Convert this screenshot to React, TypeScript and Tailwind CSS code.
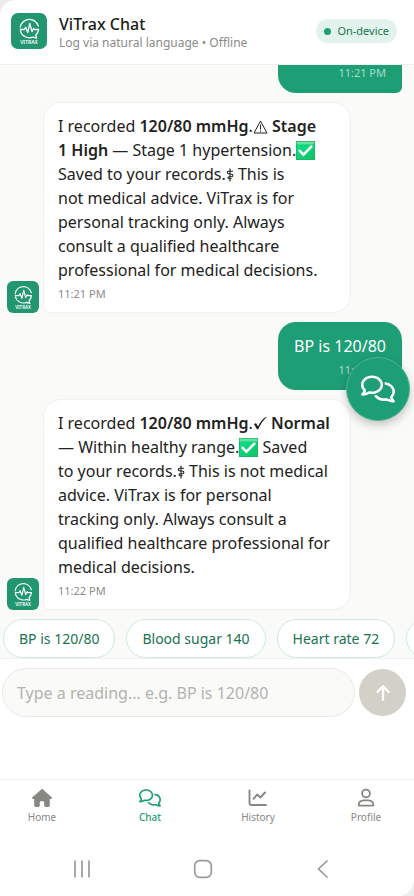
import { ReactNode, useState } from 'react';
import { FaArrowUp, FaHouse, FaRegComments } from 'react-icons/fa6';

const suggestions = ['BP is 120/80', 'Blood sugar 140', 'Heart rate 72', 'Weight 70 kg'];

const tabs = [
  { label: 'Home', icon: <FaHouse className="size-5" /> },
  { label: 'Chat', icon: <FaRegComments className="h-5 w-[22px]" /> },
  { label: 'History', icon: <ChartIcon /> },
  { label: 'Profile', icon: <ProfileIcon /> },
];

export default function App() {
  const [draft, setDraft] = useState('');

  return (
    <div className="bg-[#ededed]">
      <div className="flex h-screen flex-col overflow-hidden rounded-tl-2xl rounded-br-2xl bg-white font-['Noto_Sans','Roboto',sans-serif] text-[#222220]">
        <header className="flex h-[65px] shrink-0 items-center gap-3 border-b border-[#efefed] px-[11px] pb-0.5">
          <Logo className="size-9" />
          <div className="flex-1 pt-1">
            <h1 className="text-base leading-5 font-medium text-[#1c1c1a]">ViTrax Chat</h1>
            <p className="text-xs leading-[18px] text-[#8b8b86]">Log via natural language • Offline</p>
          </div>
          <span className="mr-1.5 flex h-6 items-center gap-1.5 rounded-full bg-[#e1f3ec] px-2 text-[11px] text-[#19734f]">
            <span className="size-[7px] rounded-full bg-[#1d9e75]" />
            On-device
          </span>
        </header>

        <div className="relative min-h-0 flex-1">
          <main className="flex h-full flex-col justify-end gap-[9px] overflow-hidden bg-[#fafaf8] px-[7px] pb-[9px]">
            <UserMessage text="BP is 135/85" time="11:21 PM" />
            <BotMessage time="11:21 PM">
              I recorded <b className="font-semibold">120/80 mmHg</b>.<Warning /> <b className="font-semibold">Stage<br />
              1 High</b> — Stage 1 hypertension.<CheckMark /><br />
              Saved to your records.<Staff /> This is<br />
              not medical advice. ViTrax is for<br />
              personal tracking only. Always<br />
              consult a qualified healthcare<br />
              professional for medical decisions.
            </BotMessage>
            <UserMessage text="BP is 120/80" time="11:22 PM" />
            <BotMessage time="11:22 PM">
              I recorded <b className="font-semibold">120/80 mmHg</b>.<Tick /> <b className="font-semibold">Normal</b><br />
              — Within healthy range.<CheckMark /> Saved<br />
              to your records.<Staff /> This is not medical<br />
              advice. ViTrax is for personal<br />
              tracking only. Always consult a<br />
              qualified healthcare professional for<br />
              medical decisions.
            </BotMessage>
          </main>
          <button
            type="button"
            aria-label="Open chat"
            className="absolute right-1 bottom-[198px] flex size-16 items-center justify-center rounded-full border border-[#4bb392] bg-[#1d9e75] text-white shadow-[0_4px_10px_rgba(0,0,0,0.22)]"
          >
            <FaRegComments className="size-[34px]" />
          </button>
        </div>

        <div className="flex shrink-0 gap-[11px] overflow-hidden border-b border-[#efefed] bg-[#fafaf8] px-[3px]">
          {suggestions.map((item) => (
            <button
              key={item}
              type="button"
              onClick={() => setDraft(item)}
              className="h-[39px] shrink-0 rounded-full border border-[#cdebdf] bg-white px-[15px] text-sm text-[#19734f]"
            >
              {item}
            </button>
          ))}
        </div>

        <form
          className="flex h-[120px] shrink-0 items-start gap-1 pt-[9px] pr-2 pl-0.5"
          onSubmit={(e) => {
            e.preventDefault();
            setDraft('');
          }}
        >
          <input
            aria-label="Reading"
            value={draft}
            onChange={(e) => setDraft(e.target.value)}
            placeholder="Type a reading... e.g. BP is 120/80"
            className="h-[49px] min-w-0 flex-1 rounded-full border border-[#e9e9e6] bg-[#fafaf8] px-3.5 text-base outline-none placeholder:text-[#b3b3af]"
          />
          <button
            type="submit"
            aria-label="Send"
            className="mt-px flex size-[47px] shrink-0 items-center justify-center rounded-full bg-[#d3d0c7] text-white"
          >
            <FaArrowUp className="size-[18px]" />
          </button>
        </form>

        <nav className="-mr-1.5 -ml-3 grid h-[62px] shrink-0 grid-cols-4 border-t border-[#efefed]">
          {tabs.map(({ label, icon }) => (
            <a
              key={label}
              href={`#${label.toLowerCase()}`}
              className={`flex flex-col items-center gap-px pt-2 text-[10px] leading-4 ${
                label === 'Chat' ? 'font-medium text-[#1d9e75]' : 'text-[#888882]'
              }`}
            >
              {icon}
              {label}
            </a>
          ))}
        </nav>

        <div className="flex h-[55px] shrink-0 items-center justify-between pr-[81px] pl-[72px] text-[#9a9a98]">
          <button type="button" aria-label="Recent apps">
            <svg viewBox="0 0 20 20" className="size-5" fill="none" stroke="currentColor" strokeWidth="1.7">
              <path d="M3 1.5v17M10 1.5v17M17 1.5v17" />
            </svg>
          </button>
          <button type="button" aria-label="Home screen">
            <svg viewBox="0 0 20 20" className="size-5" fill="none" stroke="currentColor" strokeWidth="1.7">
              <rect x="1.7" y="1.7" width="16.6" height="16.6" rx="5" />
            </svg>
          </button>
          <button type="button" aria-label="Back">
            <svg viewBox="0 0 20 20" className="size-5" fill="none" stroke="currentColor" strokeWidth="1.7">
              <path d="M14.5 1.5 5.5 10l9 8.5" />
            </svg>
          </button>
        </div>
      </div>
    </div>
  );
}

function BotMessage({ time, children }: { time: string; children: ReactNode }) {
  return (
    <div className="flex shrink-0 items-end gap-1">
      <Logo className="size-8" />
      <div className="w-[308px] rounded-[18px] rounded-bl-md border border-[#f0f0ed] bg-white px-3.5 pt-[11px] pb-2.5">
        <p className="text-base leading-6 whitespace-nowrap">{children}</p>
        <p className="pt-1 text-[11px] leading-4 text-[#8b8b86]">{time}</p>
      </div>
    </div>
  );
}

function UserMessage({ text, time }: { text: string; time: string }) {
  return (
    <div className="mr-[5px] shrink-0 self-end rounded-[18px] rounded-br-md bg-[#1d9e75] px-4 py-3 text-white">
      <p className="text-base leading-6">{text}</p>
      <p className="pt-1 text-right text-[11px] leading-4 text-[#a9dac9]">{time}</p>
    </div>
  );
}

function Logo({ className }: { className: string }) {
  return (
    <svg viewBox="0 0 36 36" className={`shrink-0 ${className}`} role="img" aria-label="ViTrax">
      <rect width="36" height="36" rx="7" fill="#21966f" />
      <g fill="none" stroke="#fff" strokeWidth="1.3" strokeLinecap="round" strokeLinejoin="round">
        <path d="M9.3 14.2a9.2 9.2 0 0 1 18-1M27.6 16.5a9.2 9.2 0 0 1-2.8 5.5l.9 3.2-4-1.1a9.2 9.2 0 0 1-12.3-6.3" />
        <path d="M9.3 16.5h4l1.4-2.2 2 5.2 2.1-9 2.2 8.2 1.5-3.2 1 1h4" />
      </g>
      <text x="18" y="31" textAnchor="middle" fill="#fff" fontSize="5" fontWeight="600">
        VITRAX
      </text>
    </svg>
  );
}

function ChartIcon() {
  return (
    <svg viewBox="0 0 20 20" className="size-5" fill="none" stroke="currentColor" strokeWidth="1.9" strokeLinecap="round" strokeLinejoin="round">
      <path d="M1.500 2.500v12.500a2 2 0 0 0 2 2h14.500" />
      <path d="m5.500 10.800 3.800-4.300 3 3 4.700-5" />
    </svg>
  );
}

function ProfileIcon() {
  return (
    <svg viewBox="0 0 20 20" className="size-5" fill="none" stroke="currentColor" strokeWidth="1.8" strokeLinejoin="round">
      <circle cx="10" cy="5.500" r="3.900" />
      <path d="M2.700 17.600c0-3.600 2.300-5.300 5-5.300h4.600c2.700 0 5 1.700 5 5.300z" />
    </svg>
  );
}

function CheckMark() {
  return (
    <svg viewBox="0 0 19 19" className="inline-block size-[19px] align-[-4px]" role="img" aria-label="Done">
      <defs>
        <linearGradient id="check" x1="0" y1="0" x2="1" y2="1">
          <stop offset="0" stopColor="#0fe08a" />
          <stop offset="1" stopColor="#10c266" />
        </linearGradient>
      </defs>
      <rect width="19" height="19" fill="#1fae63" />
      <rect x=".7" y=".7" width="17.600" height="17.600" fill="url(#check)" />
      <path d="M.7.7h17.600v2.600H.7z" fill="#6be29b" />
      <path d="m3.700 9.800 3.800 3.900 7.800-8" fill="none" stroke="#fff" strokeWidth="2.6" strokeLinecap="round" />
    </svg>
  );
}

function Warning() {
  return (
    <svg viewBox="0 0 15 14" className="inline-block h-3.5 w-[15px] align-[-2px]" role="img" aria-label="Warning" fill="none" stroke="currentColor">
      <path d="M7.5 1 14 13H1zM7.5 4.5v5M7.5 10.5v1.3" />
    </svg>
  );
}

function Tick() {
  return (
    <svg viewBox="0 0 14 14" className="inline-block size-3.5 align-[-1px]" role="img" aria-label="OK">
      <path d="M1 8.3 3 7l2 3.4C7 6 9.500 3 13.300.700l.4.5C10 4.500 7.500 8 5.300 13.300H4z" fill="currentColor" />
    </svg>
  );
}

function Staff() {
  return (
    <svg viewBox="0 0 8 14" className="inline-block h-3.5 w-2 align-[-2px]" role="img" aria-label="Medical" fill="none" stroke="currentColor" strokeWidth="1.1">
      <path d="M4 .5v13" />
      <path d="M7 3.200H2.500c-1.500 0-1.500 2.300 0 2.500l3 .5c1.800.3 1.800 2.300 0 2.500H3c-1.300.2-1.300 1.900 0 2.100h2.500" />
    </svg>
  );
}
